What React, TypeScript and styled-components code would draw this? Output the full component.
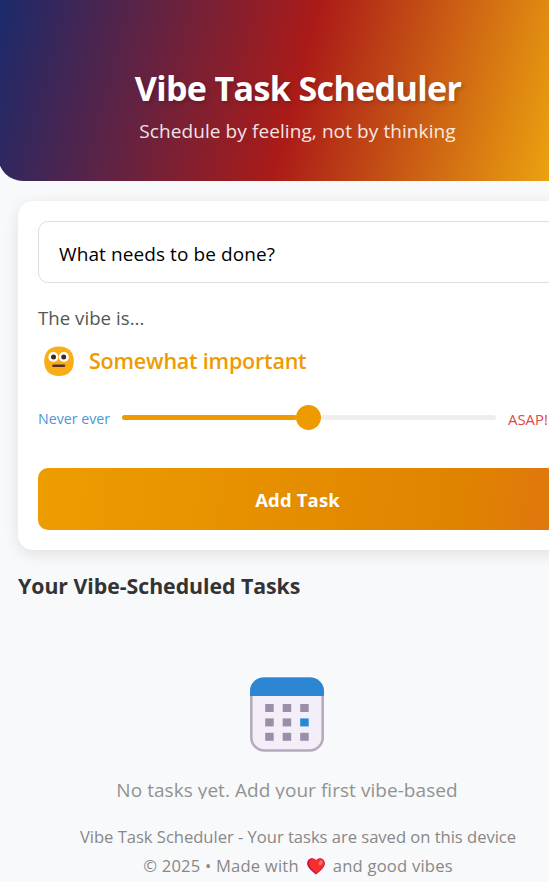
import React, { useState } from 'react';
import styled, { createGlobalStyle } from 'styled-components';

const GlobalStyle = createGlobalStyle`
  *, *::before, *::after { box-sizing: border-box; }
  html, body { margin: 0; padding: 0; overflow: hidden; }
  body {
    background: #f8f9fb;
    color: #333;
    font-family: 'Open Sans', 'Noto Sans', sans-serif;
  }
`;

const Page = styled.div`
  width: 596px;
  height: 882px;
  display: flex;
  flex-direction: column;
  overflow: hidden;
`;

const Header = styled.header`
  height: 181px;
  margin-left: -2px;
  padding: 66px 0 0 2px;
  flex: none;
  border-radius: 0 0 25px 25px;
  background: linear-gradient(105deg, #1a2a6c 0%, #ab1b18 50%, #f6b90e 100%);
  color: #fff;
  text-align: center;
`;

const Title = styled.h1`
  margin: 0;
  font-size: 34px;
  font-weight: 700;
  line-height: 44px;
  letter-spacing: -0.62px;
  text-shadow: 2px 2px 4px rgba(0, 0, 0, 0.2);
`;

const Subtitle = styled.p`
  margin: 6px 1px 0 0;
  font-size: 19px;
  line-height: 30px;
  letter-spacing: 0.09px;
  opacity: 0.88;
`;

const Main = styled.main`
  width: 577px;
  height: 618px;
  flex: none;
  padding: 20px 0 0 18px;
  overflow: hidden;
`;

const Card = styled.form`
  width: 559px;
  height: 349px;
  padding: 20px;
  border-radius: 15px;
  background: #fff;
  box-shadow: 0 4px 15px rgba(0, 0, 0, 0.1);
`;

const TaskInput = styled.input`
  display: block;
  width: 100%;
  height: 62px;
  padding: 4px 20px 0;
  border: 1px solid #ddd;
  border-radius: 10px;
  background: #fff;
  color: #000;
  font: 400 19px 'Open Sans', sans-serif;
  letter-spacing: 0.09px;
  outline: none;
  &::placeholder { color: #000; opacity: 1; }
`;

const VibeLabel = styled.div`
  margin-top: 20px;
  color: #555;
  font-size: 18.6px;
  line-height: 29px;
  letter-spacing: 0.05px;
`;

const VibeRow = styled.div`
  display: flex;
  align-items: center;
  gap: 14px;
  height: 42px;
  margin-top: 8px;
  padding-left: 5px;
  color: #ed9b00;
  font-size: 21.5px;
  font-weight: 600;
  letter-spacing: -0.2px;
`;

const VibeName = styled.span`
  padding-bottom: 2px;
`;

const SliderRow = styled.div`
  display: flex;
  align-items: center;
  gap: 12px;
  height: 26px;
  margin-top: 22px;
`;

const EndLabel = styled.span<{ $color: string; $width: number; $size: number }>`
  flex: none;
  width: ${(p) => p.$width}px;
  padding-top: 3px;
  color: ${(p) => p.$color};
  font-size: ${(p) => p.$size}px;
  line-height: 20px;
  white-space: nowrap;
`;

const Slider = styled.div`
  display: flex;
  align-items: center;
  flex: 1;
`;

const Track = styled.div<{ $color: string }>`
  flex: 1;
  height: 5px;
  border-radius: 3px;
  background: ${(p) => p.$color};
`;

const Thumb = styled.div`
  flex: none;
  width: 25px;
  height: 25px;
  margin: 0 0 0 -1px;
  border-radius: 50%;
  background: #ed9b00;
`;

const AddButton = styled.button`
  display: block;
  width: 100%;
  height: 62px;
  margin-top: 38px;
  padding: 0;
  border: 0;
  border-radius: 10px;
  background: linear-gradient(94deg, #ed9d00 0%, #e08300 82%, #df790c 96%);
  color: #fff;
  font: 700 18.5px 'Open Sans', sans-serif;
  letter-spacing: 0.15px;
`;

const SectionTitle = styled.h2`
  margin: 21px 0 0;
  color: #333;
  font-size: 21.3px;
  font-weight: 700;
  line-height: 30px;
  letter-spacing: -0.04px;
`;

const EmptyState = styled.div`
  width: 538px;
  margin-top: 76px;
  display: flex;
  flex-direction: column;
  align-items: center;
  color: #929292;
`;

const EmptyText = styled.p`
  margin: 23px 0 0;
  font-size: 19px;
  line-height: 30px;
  letter-spacing: 0.05px;
`;

const Footer = styled.footer`
  padding-top: 23px;
  color: #888;
  font-size: 16.6px;
  line-height: 29px;
`;

const FooterLine = styled.div<{ $spacing: number }>`
  display: flex;
  justify-content: center;
  align-items: center;
  letter-spacing: ${(p) => p.$spacing}px;
`;

const HeartSlot = styled.span`
  display: flex;
  margin: 2px 8px 0 8px;
`;

const Face = () => (
  <svg width="32" height="32" viewBox="0 0 32 32">
    <path d="M16 1.600C25.500 1.600 30.800 7 30.800 16.200S25.500 31 16 31 1.200 25.500 1.200 16.200 6.500 1.600 16 1.600Z" fill="#f8ae16" />
    <circle cx="10.300" cy="12" r="5" fill="#fff" />
    <circle cx="20.900" cy="12" r="5" fill="#fff" />
    <circle cx="10.500" cy="12.100" r="2.500" fill="#44252b" />
    <circle cx="20.700" cy="12.100" r="2.500" fill="#44252b" />
    <rect x="9.200" y="19.400" width="13" height="2.500" rx="1.200" fill="#53302b" />
  </svg>
);

const Heart = () => (
  <svg width="18" height="17" viewBox="0 0 18 17">
    <path d="M9 2.400C7.500 .4 5 -.2 3 .8 0 2.200 -.6 5.800 1 8.500 2.700 11.400 6.200 14.200 9 16.500 11.800 14.200 15.300 11.400 17 8.500 18.600 5.800 18 2.200 15 .8 13 -.2 10.500 .4 9 2.400Z" fill="#ca0b4a" />
    <path d="M9.500 2.600C8.300 1 6.300 .4 4.500 1.200 1.700 2.400 1.500 5.800 2.800 8.200 4.300 11 7.200 13.300 9.500 15.200 12 13.300 14.800 11 16.500 8.300 18 5.800 17.600 2.500 15 1.200 13 .2 10.800 .8 9.500 2.600Z" fill="#f42e2c" />
    <ellipse cx="13.700" cy="4.700" rx="1.700" ry="2.600" transform="rotate(28 13.700 4.700)" fill="#f87970" />
  </svg>
);

const cells = [0, 1, 2].flatMap((row) => [0, 1, 2].map((col) => ({ row, col })));

const Calendar = () => (
  <svg width="74" height="75" viewBox="0 0 74 75">
    <rect x="1.300" y="1.600" width="71.400" height="71.900" rx="13" fill="#f3eef8" stroke="#b4abbd" strokeWidth="2.600" />
    <path d="M0 19V14.300C0 6.300 6 .4 14 .4H60C68 .4 74 6.300 74 14.300V19Z" fill="#2d86d3" />
    {cells.map(({ row, col }) => (
      <rect
        key={`${row}-${col}`}
        x={15.2 + col * 17.5}
        y={27 + row * 14.4}
        width="8.500"
        height="8"
        fill={row === 1 && col === 2 ? '#2488d4' : '#998fa8'}
      />
    ))}
  </svg>
);

export default function App() {
  const [task, setTask] = useState('');
  return (
    <>
      <GlobalStyle />
      <Page>
        <Header>
          <Title>Vibe Task Scheduler</Title>
          <Subtitle>Schedule by feeling, not by thinking</Subtitle>
        </Header>
        <Main>
          <Card onSubmit={(e) => e.preventDefault()}>
            <TaskInput
              placeholder="What needs to be done?"
              value={task}
              onChange={(e) => setTask(e.target.value)}
            />
            <VibeLabel>The vibe is...</VibeLabel>
            <VibeRow>
              <Face />
              <VibeName>Somewhat important</VibeName>
            </VibeRow>
            <SliderRow>
              <EndLabel $color="#4a97dc" $width={72} $size={14.2}>Never ever</EndLabel>
              <Slider>
                <Track $color="#ed9b00" />
                <Thumb />
                <Track $color="#eee" />
              </Slider>
              <EndLabel $color="#e04848" $width={49} $size={14.9}>ASAP!</EndLabel>
            </SliderRow>
            <AddButton type="submit">Add Task</AddButton>
          </Card>
          <SectionTitle>Your Vibe-Scheduled Tasks</SectionTitle>
          <EmptyState>
            <Calendar />
            <EmptyText>No tasks yet. Add your first vibe-based</EmptyText>
          </EmptyState>
        </Main>
        <Footer>
          <FooterLine $spacing={-0.03}>Vibe Task Scheduler - Your tasks are saved on this device</FooterLine>
          <FooterLine $spacing={0.2}>
            <span>© 2025 • Made with</span>
            <HeartSlot><Heart /></HeartSlot>
            <span>and good vibes</span>
          </FooterLine>
        </Footer>
      </Page>
    </>
  );
}
